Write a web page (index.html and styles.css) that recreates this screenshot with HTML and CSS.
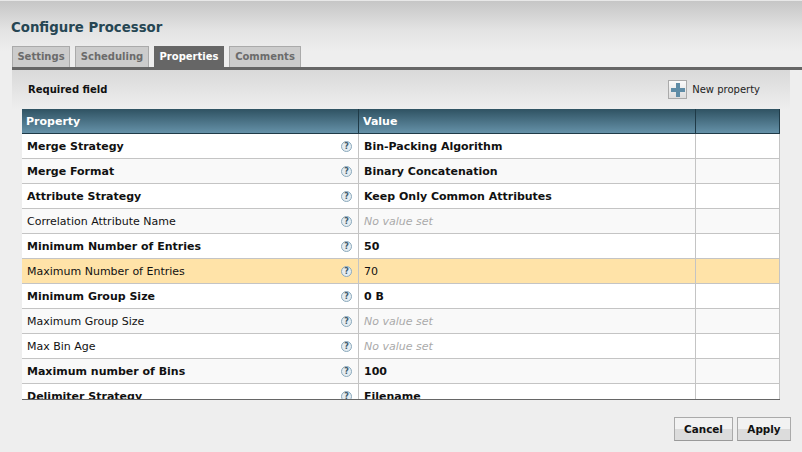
FILE: index.html
```html
<html>
<head>
<title>Configure Processor</title>
<meta charset="UTF-8">
<link rel="stylesheet" href="styles.css">
</head>
<body>
<div class="dialog">
	<h2 class="title">Configure Processor</h2>
	<div class="tabs">
		<div class="tab settings">Settings</div>
		<div class="tab scheduling">Scheduling</div>
		<div class="tab properties selected">Properties</div>
		<div class="tab comments">Comments</div>
	</div>
	<div class="panel">
		<div class="toolbar">
			<span class="required">Required field</span>
			<span class="newProperty">
				<span class="addButton">
					<svg width="14" height="14" viewBox="0 0 14 14"><path d="M5 0h4v5h5v4H9v5H5V9H0V5h5z" fill="#5f8ca6"/></svg>
				</span>
				New property
			</span>
		</div>
		<div class="grid">
			<div class="row head">
				<div class="cell name">Property</div>
				<div class="cell value">Value</div>
				<div class="cell actions"></div>
			</div>
			<div class="rows">
				<div class="row req">
					<div class="cell name">Merge Strategy<span class="help">?</span></div>
					<div class="cell value">Bin-Packing Algorithm</div>
					<div class="cell actions"></div>
				</div>
				<div class="row req odd">
					<div class="cell name">Merge Format<span class="help">?</span></div>
					<div class="cell value">Binary Concatenation</div>
					<div class="cell actions"></div>
				</div>
				<div class="row req">
					<div class="cell name">Attribute Strategy<span class="help">?</span></div>
					<div class="cell value">Keep Only Common Attributes</div>
					<div class="cell actions"></div>
				</div>
				<div class="row odd">
					<div class="cell name">Correlation Attribute Name<span class="help">?</span></div>
					<div class="cell value empty">No value set</div>
					<div class="cell actions"></div>
				</div>
				<div class="row req">
					<div class="cell name">Minimum Number of Entries<span class="help">?</span></div>
					<div class="cell value">50</div>
					<div class="cell actions"></div>
				</div>
				<div class="row active">
					<div class="cell name">Maximum Number of Entries<span class="help">?</span></div>
					<div class="cell value">70</div>
					<div class="cell actions"></div>
				</div>
				<div class="row req">
					<div class="cell name">Minimum Group Size<span class="help">?</span></div>
					<div class="cell value">0 B</div>
					<div class="cell actions"></div>
				</div>
				<div class="row odd">
					<div class="cell name">Maximum Group Size<span class="help">?</span></div>
					<div class="cell value empty">No value set</div>
					<div class="cell actions"></div>
				</div>
				<div class="row">
					<div class="cell name">Max Bin Age<span class="help">?</span></div>
					<div class="cell value empty">No value set</div>
					<div class="cell actions"></div>
				</div>
				<div class="row req odd">
					<div class="cell name">Maximum number of Bins<span class="help">?</span></div>
					<div class="cell value">100</div>
					<div class="cell actions"></div>
				</div>
				<div class="row req">
					<div class="cell name">Delimiter Strategy<span class="help">?</span></div>
					<div class="cell value">Filename</div>
					<div class="cell actions"></div>
				</div>
			</div>
		</div>
	</div>
	<div class="buttons">
		<button class="btn cancel">Cancel</button>
		<button class="btn apply">Apply</button>
	</div>
</div>
</body>
</html>
```

FILE: styles.css
```css
html, body {
	margin: 0;
	height: 100%;
}

body {
	font: 11px "DejaVu Sans", Verdana, sans-serif;
	background-color: #eeeeee;
	color: #111;
	overflow: hidden;
}

.dialog {
	height: 452px;
	box-sizing: border-box;
	padding: 0 11px 0 12px;
	background: linear-gradient(#c6c6c6 0, #e4e4e4 30px, #eeeeee 50px, #eeeeee 100%);
	border-top: 1px solid #e8e8e8;
}

.title {
	margin: 0 0 0 -1px;
	padding-top: 18px;
	height: 27px;
	font-size: 13.3px;
	line-height: 17px;
	color: #264653;
}

.tabs {
	display: flex;
	gap: 5px;
}

.tab {
	box-sizing: border-box;
	height: 21px;
	font-size: 10px;
	line-height: 20px;
	text-align: center;
	font-weight: bold;
	color: #6b6b6b;
	background-color: #cccccc;
	border: 1px solid #aaaaaa;
	border-bottom: none;
}

.settings {
	width: 58px;
}

.scheduling {
	width: 74px;
}

.properties {
	width: 70px;
}

.comments {
	width: 72px;
}

.tab.selected {
	color: #fff;
	background-color: #666666;
	border-color: #666666;
}

.panel {
	margin-right: -11px;
	padding-right: 0;
	border-top: 3px solid #666666;
}

.toolbar {
	display: flex;
	justify-content: space-between;
	align-items: center;
	box-sizing: border-box;
	height: 39px;
	width: 778px;
	padding: 0 30px 0 16px;
	font-size: 10px;
	background: linear-gradient(#d9d9d9, #eeeeee);
}

.required {
	font-weight: bold;
}

.newProperty {
	display: flex;
	align-items: center;
	gap: 5px;
	color: #222;
}

.addButton {
	display: flex;
	align-items: center;
	justify-content: center;
	box-sizing: border-box;
	width: 19px;
	height: 19px;
	background: linear-gradient(#fafafa, #dddddd);
	border: 1px solid #aaaaaa;
}

.grid {
	width: 758px;
	margin-left: 10px;
	border-bottom: 1px solid #666666;
}

.rows {
	height: 265px;
	overflow: hidden;
}

.row {
	display: flex;
	height: 25px;
	box-sizing: border-box;
	background-color: #ffffff;
	border-bottom: 1px solid #c4c4c4;
	border-right: 1px solid #c4c4c4;
}

.row.odd {
	background-color: #f9f9f9;
}

.row.active {
	background-color: #ffe3a8;
}

.row.req {
	font-weight: bold;
}

.row.head {
	color: #fff;
	font-weight: bold;
	background: linear-gradient(#2f5262, #6591a8);
	border-bottom: 1px solid #1f3a47;
	border-right: 1px solid #1f3a47;
}

.cell {
	box-sizing: border-box;
	line-height: 26px;
	white-space: nowrap;
}

.name {
	display: flex;
	justify-content: space-between;
	width: 337px;
	padding: 0 6px 0 5px;
	border-right: 1px solid #c4c4c4;
}

.value {
	width: 337px;
	padding-left: 5px;
	border-right: 1px solid #c4c4c4;
}

.actions {
	flex: 1;
}

.head .cell {
	padding-left: 4px;
	border-color: #1f3a47;
}

.empty {
	font-style: italic;
	font-weight: normal;
	color: #aaaaaa;
}

.help {
	align-self: center;
	box-sizing: border-box;
	width: 11px;
	height: 11px;
	border: 1px solid #8aa9bc;
	border-radius: 50%;
	font-size: 8px;
	font-weight: bold;
	line-height: 9px;
	text-align: center;
	color: #3d5a6b;
	background-color: #e4ecf1;
}

.buttons {
	display: flex;
	justify-content: flex-end;
	gap: 4px;
	margin: 17px 0 0 0;
}

.btn {
	box-sizing: border-box;
	height: 24px;
	padding: 0;
	font: bold 10.4px "DejaVu Sans", Verdana, sans-serif;
	color: #111;
	background: linear-gradient(#f2f2f2 0, #f2f2f2 50%, #dcdcdc 50%, #dcdcdc 100%);
	border: 1px solid #aaaaaa;
	border-bottom-color: #999;
}

.cancel {
	width: 59px;
}

.apply {
	width: 54px;
}
```
